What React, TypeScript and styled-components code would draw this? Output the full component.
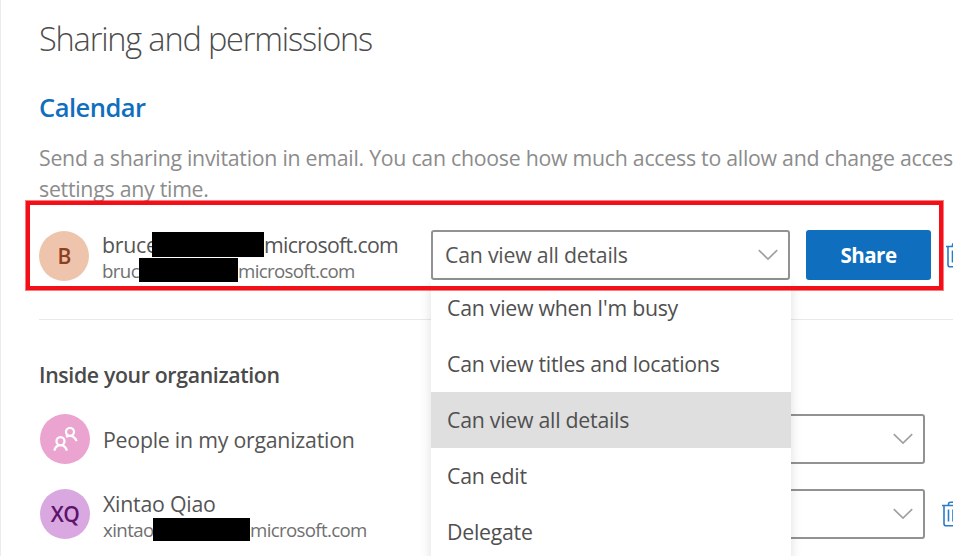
import React from "react";
import styled, { createGlobalStyle } from "styled-components";

const GlobalStyle = createGlobalStyle`
  * { box-sizing: border-box; }
  body {
    margin: 0;
    background: #fff;
    overflow: hidden;
    font-family: "Open Sans", "Noto Sans", sans-serif;
    font-size: 21.3px;
    color: #555;
  }
  svg { flex: none; }
`;

const Page = styled.main`
  position: relative;
  width: 953px;
  height: 556px;
  overflow: hidden;
  padding-left: 38px;
  border-left: 1px solid #ececec;
`;

const Title = styled.h1`
  margin: 0;
  padding-top: 16px;
  height: 83px;
  font-size: 32.5px;
  line-height: 46px;
  font-weight: 300;
  letter-spacing: -1.16px;
  color: #4c4c4c;
`;

const SectionTitle = styled.h2`
  margin: 0;
  height: 59px;
  font-size: 25.5px;
  line-height: 48px;
  font-weight: 600;
  letter-spacing: -0.5px;
  color: #106ebe;
`;

const Description = styled.p`
  margin: 0;
  height: 63px;
  line-height: 31px;
  letter-spacing: -0.26px;
  white-space: nowrap;
  color: #8c8c8c;
`;

const InviteRow = styled.section`
  display: grid;
  grid-template-columns: 392px 359px 125px 24px;
  align-items: center;
  height: 115px;
  padding-bottom: 15px;
  border-bottom: 1px solid #e9e9e9;
`;

const Person = styled.div<{ $drop?: number }>`
  display: flex;
  align-items: center;
  gap: 13px;
  padding-top: ${(p) => p.$drop ?? 0}px;
`;

const Avatar = styled.div<{ $bg: string; $fg: string }>`
  display: flex;
  align-items: center;
  justify-content: center;
  flex: none;
  width: 50px;
  height: 50px;
  border-radius: 50%;
  background: ${(p) => p.$bg};
  color: ${(p) => p.$fg};
  font-weight: 600;
  font-size: 21px;
  letter-spacing: -0.6px;
`;

const Identity = styled.div<{ $drop?: number }>`
  display: flex;
  flex-direction: column;
  padding-top: ${(p) => p.$drop ?? 0}px;
`;

const Line = styled.div<{ $small?: boolean }>`
  display: flex;
  align-items: center;
  height: ${(p) => (p.$small ? 25 : 26)}px;
  font-size: ${(p) => (p.$small ? 18.7 : 21.3)}px;
  letter-spacing: ${(p) => (p.$small ? -0.6 : -0.23)}px;
  color: ${(p) => (p.$small ? "#707070" : "#555")};
  white-space: nowrap;
`;

const Prefix = styled.span<{ $width: number }>`
  width: ${(p) => p.$width}px;
`;

const Redacted = styled.span<{ $width: number; $height: number }>`
  z-index: 1;
  width: ${(p) => p.$width}px;
  height: ${(p) => p.$height}px;
  background: #000;
`;

const Domain = styled.span`
  letter-spacing: -0.67px;
`;

const Select = styled.div`
  display: flex;
  align-items: center;
  justify-content: space-between;
  height: 50px;
  padding: 0 10px 0 12px;
  border: 2px solid #929292;
  border-radius: 3px;
  letter-spacing: -0.23px;
  background: #fff;
`;

const ShareButton = styled.button`
  height: 50px;
  margin-left: 16px;
  width: 125px;
  border: 0;
  border-radius: 3px;
  background: #106ebe;
  color: #fff;
  font: 700 20.5px "Open Sans", "Noto Sans", sans-serif;
  letter-spacing: -0.5px;
`;

const InviteDelete = styled.span`
  display: flex;
  margin-left: 31px;
`;

const OrgTitle = styled.h3`
  margin: 0;
  height: 94px;
  padding-top: 39px;
  font-size: 21.3px;
  line-height: 31px;
  font-weight: 600;
  letter-spacing: -0.36px;
  color: #4a4a4a;
`;

const OrgRow = styled.section`
  display: grid;
  grid-template-columns: 525px 360px 30px;
  grid-template-rows: 50px;
  align-items: center;
  height: 50px;
  margin-bottom: 25px;
  padding-left: 1px;
`;

const OrgDelete = styled.span`
  display: flex;
  margin-left: 17px;
`;

const Menu = styled.ul`
  position: absolute;
  left: 430px;
  top: 280px;
  width: 360px;
  margin: 0;
  padding: 0;
  list-style: none;
  background: #fff;
  box-shadow: 0 4px 11px rgba(0, 0, 0, 0.13);
`;

const Option = styled.li<{ $selected?: boolean }>`
  display: flex;
  align-items: center;
  height: 56px;
  padding: 0 0 2px 16px;
  letter-spacing: -0.26px;
  color: #505050;
  background: ${(p) => (p.$selected ? "#dfdfdf" : "#fff")};
`;

const Highlight = styled.div`
  position: absolute;
  left: 25px;
  top: 201px;
  width: 917px;
  height: 89px;
  border: 4px solid #f20f18;
  box-shadow: 0 0 0 1px rgba(242, 15, 24, 0.55);
  pointer-events: none;
`;

const Chevron = () => (
  <svg width="20" height="12" viewBox="0 0 20 12" fill="none" stroke="#a0a0a0" strokeWidth="1.7">
    <path d="M0.8 1.2 L10 10 L19.2 1.2" />
  </svg>
);

const Trash = () => (
  <svg width="22" height="26" viewBox="0 0 22 26" fill="none" stroke="#2b7cc6" strokeWidth="1.6">
    <path d="M0 4.5H22M6.5 4.5V3.2Q6.5 1.2 8.5 1.2H13.5Q15.5 1.2 15.5 3.2V4.5M2 4.5V22.7Q2 24.7 4 24.7H18Q20 24.7 20 22.7V4.5M6.5 8.5V20.5M11 8.5V20.5M15.5 8.5V20.5" />
  </svg>
);

const PeopleIcon = () => (
  <svg width="26" height="26" viewBox="0 0 26 26" fill="none" stroke="#fff" strokeWidth="2.3">
    <circle cx="18" cy="5.8" r="4" />
    <circle cx="8.5" cy="15.2" r="4" />
    <path d="M13.9 10.8Q15.7 9.7 18 9.8Q22.8 10 24.6 15.2M2.3 24.6Q3.8 19.2 8.5 19.2Q13.2 19.2 14.9 24.6" />
  </svg>
);

const options = [
  "Can view when I'm busy",
  "Can view titles and locations",
  "Can view all details",
  "Can edit",
  "Delegate",
];

export default function App() {
  return (
    <>
      <GlobalStyle />
      <Page>
        <Title>Sharing and permissions</Title>
        <SectionTitle>Calendar</SectionTitle>
        <Description>
          Send a sharing invitation in email. You can choose how much access to allow and change acces
          <br />
          settings any time.
        </Description>
        <InviteRow>
          <Person $drop={3}>
            <Avatar $bg="#efc4ad" $fg="#8e3f1e">B</Avatar>
            <Identity $drop={2}>
              <Line>
                <Prefix $width={50}>bruce</Prefix>
                <Redacted $width={112} $height={25} />
                <Domain>microsoft.com</Domain>
              </Line>
              <Line $small>
                <Prefix $width={37}>bruc</Prefix>
                <Redacted $width={99} $height={24} />
                <Domain>microsoft.com</Domain>
              </Line>
            </Identity>
          </Person>
          <Select>
            Can view all details
            <Chevron />
          </Select>
          <ShareButton>Share</ShareButton>
          <InviteDelete>
            <Trash />
          </InviteDelete>
        </InviteRow>
        <OrgTitle>Inside your organization</OrgTitle>
        <OrgRow>
          <Person>
            <Avatar $bg="#eba3d0" $fg="#fff">
              <PeopleIcon />
            </Avatar>
            <Line>People in my organization</Line>
          </Person>
          <Select>
            Can view all details
            <Chevron />
          </Select>
        </OrgRow>
        <OrgRow>
          <Person>
            <Avatar $bg="#d9a8e0" $fg="#5c146c">XQ</Avatar>
            <Identity $drop={4}>
              <Line>Xintao Qiao</Line>
              <Line $small>
                <Prefix $width={50}>xintao</Prefix>
                <Redacted $width={97} $height={23} />
                <Domain>microsoft.com</Domain>
              </Line>
            </Identity>
          </Person>
          <Select>
            Can view all details
            <Chevron />
          </Select>
          <OrgDelete>
            <Trash />
          </OrgDelete>
        </OrgRow>
        <Menu>
          {options.map((label, i) => (
            <Option key={label} $selected={i === 2}>
              {label}
            </Option>
          ))}
        </Menu>
        <Highlight />
      </Page>
    </>
  );
}
